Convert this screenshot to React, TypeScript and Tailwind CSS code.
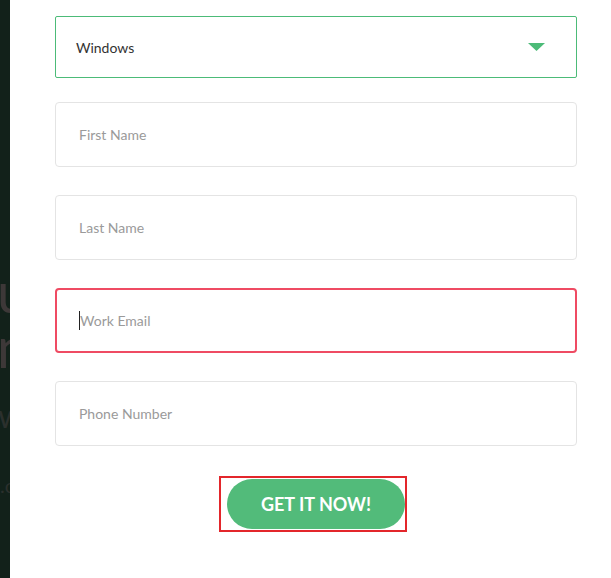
import { useState } from 'react';

const inputs = [
  { key: 'first', label: 'First Name' },
  { key: 'last', label: 'Last Name' },
  { key: 'email', label: 'Work Email', error: true },
  { key: 'phone', label: 'Phone Number' },
];

export default function App() {
  const [os] = useState('Windows');

  return (
    <div className="flex h-[578px] w-[611px] overflow-hidden bg-white font-['Lato','Open_Sans',sans-serif]">
      {/* page behind the modal */}
      <div className="w-[10px] shrink-0 overflow-hidden bg-[#12211a]">
        <div className="mt-[264px] flex w-[60px] flex-col">
          <div className="ml-[-3px] h-[55px] text-[56px] leading-[56px] text-[#3d3838]">u</div>
          <div className="ml-[-3px] h-[81px] text-[56px] leading-[56px] text-[#3d3838]">n</div>
          <div className="ml-[-2px] h-[75px] text-[32px] leading-[32px] text-[#2b302d]">w</div>
          <div className="ml-[0px] h-[20px] text-[20px] leading-[20px] text-[#2b302d]">.c</div>
        </div>
      </div>

      {/* form */}
      <div className="flex flex-1 flex-col pl-[45px] pr-[34px] pt-[16px]">
        <div className="flex h-[62px] items-center justify-between rounded-[2px] border border-[#4cbb78] pl-[20px] pr-[31px]">
          <span className="text-[14px] text-[#333]">{os}</span>
          <svg width="17" height="8" viewBox="0 0 17 8">
            <path d="M0 0H17L8.5 8Z" fill="#4cbb78" />
          </svg>
        </div>

        <div className="mt-[24px] flex flex-col gap-[28px]">
          {inputs.map((f) =>
            f.error ? (
              <div
                key={f.key}
                className="flex h-[65px] items-center rounded-[4px] border-2 border-[#ef4b63] pl-[22px]"
              >
                <span className="h-[19px] w-px bg-[#222]" />
                <span className="text-[14px] text-[#9a9a9a]">{f.label}</span>
              </div>
            ) : (
              <div
                key={f.key}
                className="flex h-[65px] items-center rounded-[4px] border border-[#e4e4e4] pl-[23px]"
              >
                <span className="text-[14px] text-[#9a9a9a]">{f.label}</span>
              </div>
            )
          )}
        </div>

        <div className="mt-[30px] flex justify-center">
          <div className="ml-[-6px] border-2 border-[#e3262b] py-[1px] pl-[6px]">
            <button className="h-[50px] w-[178px] rounded-full bg-[#52bb7a] text-[18px] font-bold text-white">
              GET IT NOW!
            </button>
          </div>
        </div>
      </div>
    </div>
  );
}
